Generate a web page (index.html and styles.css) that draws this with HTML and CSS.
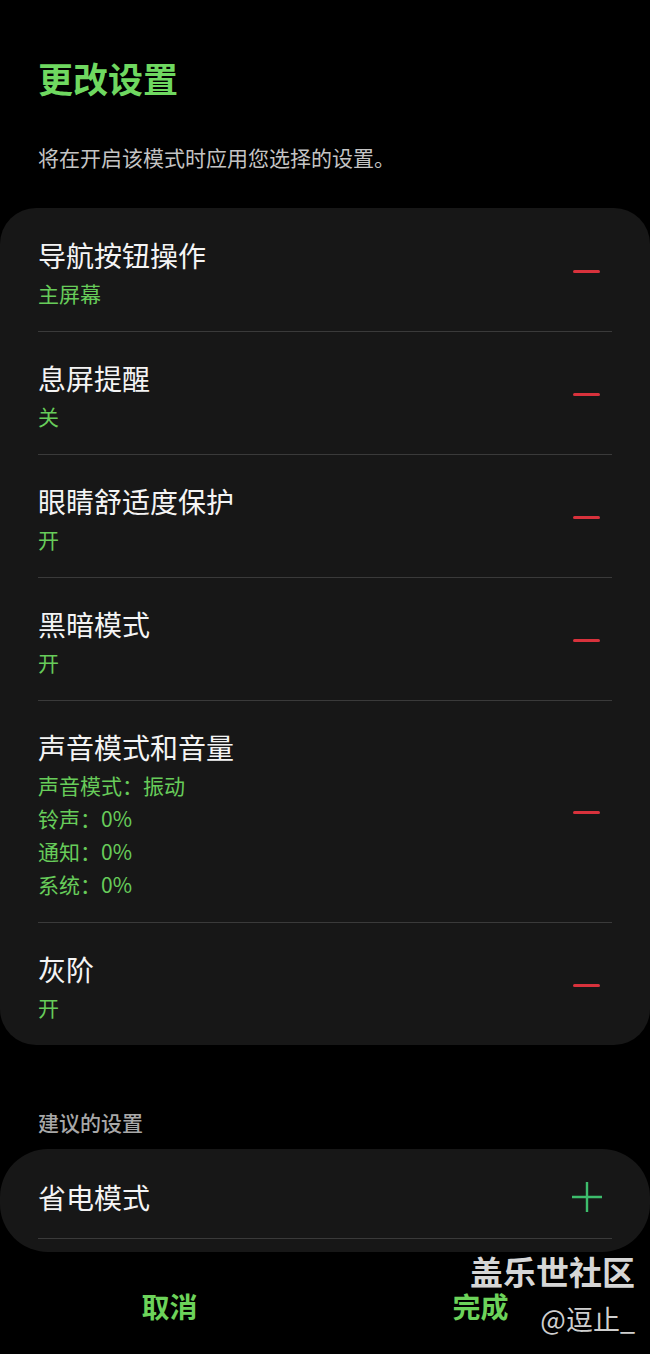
FILE: index.html
```html
<!DOCTYPE html>
<html lang="zh-CN">
<head>
  <meta charset="UTF-8" />
  <meta name="viewport" content="width=device-width, initial-scale=1.0"/>
  <title>更改设置</title>
  <link rel="stylesheet" href="styles.css">
</head>
<body>

<div class="page">
  <!-- 标题 -->
  <div class="header">
    <h1>更改设置</h1>
    <p class="desc">将在开启该模式时应用您选择的设置。</p>
  </div>

  <!-- 已选设置 -->
  <div class="card">
    <div class="row">
      <div class="text">
        <div class="name">导航按钮操作</div>
        <div class="value">主屏幕</div>
      </div>
      <span class="minus"></span>
    </div>
    <div class="row">
      <div class="text">
        <div class="name">息屏提醒</div>
        <div class="value">关</div>
      </div>
      <span class="minus"></span>
    </div>
    <div class="row">
      <div class="text">
        <div class="name">眼睛舒适度保护</div>
        <div class="value">开</div>
      </div>
      <span class="minus"></span>
    </div>
    <div class="row">
      <div class="text">
        <div class="name">黑暗模式</div>
        <div class="value">开</div>
      </div>
      <span class="minus"></span>
    </div>
    <div class="row">
      <div class="text">
        <div class="name">声音模式和音量</div>
        <div class="value">声音模式：振动</div>
        <div class="value">铃声：0%</div>
        <div class="value">通知：0%</div>
        <div class="value">系统：0%</div>
      </div>
      <span class="minus"></span>
    </div>
    <div class="row">
      <div class="text">
        <div class="name">灰阶</div>
        <div class="value">开</div>
      </div>
      <span class="minus"></span>
    </div>
  </div>

  <!-- 建议的设置 -->
  <div class="section-title">建议的设置</div>
  <div class="card card-suggest">
    <div class="row row-single">
      <div class="text">
        <div class="name">省电模式</div>
      </div>
      <svg class="plus" width="30" height="30" viewBox="0 0 30 30">
        <path d="M15 0V30M0 15H30" stroke="#3dbd6c" stroke-width="2.4" fill="none"/>
      </svg>
    </div>
  </div>

  <!-- 底部按钮 -->
  <div class="bottom-bar">
    <button class="btn">取消</button>
    <button class="btn">完成</button>
  </div>

  <div class="watermark">
    <div class="wm-main">盖乐世社区</div>
    <div class="wm-user">@逗止_</div>
  </div>
</div>

</body>
</html>
```

FILE: styles.css
```css
body {
  margin: 0;
  background-color: #000;
  font-family: "Noto Sans CJK SC", "Noto Sans", sans-serif;
  color: #f2f2f2;
}
.page {
  position: relative;
  width: 650px;
  height: 1354px;
  overflow: hidden;
}
.header {
  padding: 56px 38px 0;
}
h1 {
  margin: 0;
  font-size: 35px;
  line-height: 44px;
  font-weight: 700;
  color: #6fd860;
}
.desc {
  margin: 43px 0 0;
  font-size: 21px;
  line-height: 28px;
  color: #c4c4c4;
}
.card {
  margin-top: 37px;
  background-color: #171717;
  border-radius: 36px;
  padding: 0 38px;
}
.row {
  display: flex;
  align-items: center;
  justify-content: space-between;
  padding: 27px 0 21px;
}
.row + .row {
  border-top: 1px solid #3a3a3a;
  padding-top: 26px;
}
.name {
  font-size: 28px;
  line-height: 40px;
  color: #f4f4f4;
}
.value {
  font-size: 21px;
  line-height: 33px;
  color: #67cc5a;
}
.name + .value {
  margin-top: 2px;
}
.minus {
  display: block;
  width: 27px;
  height: 3px;
  border-radius: 2px;
  background-color: #d8323c;
  margin: 0 12px 3px 0;
}
.section-title {
  margin-top: 63px;
  padding: 0 38px;
  font-size: 21px;
  line-height: 28px;
  font-weight: 500;
  color: #a8a8a8;
}
.card-suggest {
  margin-top: 13px;
  border-radius: 48px;
  padding-bottom: 13px;
}
.row-single {
  padding: 28px 0 21px;
  border-bottom: 1px solid #3a3a3a;
}
.plus {
  display: block;
  margin-right: 10px;
}
.bottom-bar {
  display: flex;
  padding: 38px 14px 0;
}
.btn {
  flex: 1;
  background: none;
  border: none;
  padding: 0;
  font-family: inherit;
  font-size: 28px;
  line-height: 32px;
  font-weight: 700;
  color: #6cd35a;
}
.watermark {
  position: absolute;
  right: 15px;
  top: 1253px;
  text-align: right;
}
.wm-main {
  font-size: 33px;
  line-height: 36px;
  font-weight: 700;
  color: #d6d6d6;
}
.wm-user {
  margin-top: 14px;
  font-size: 27px;
  line-height: 32px;
  color: #cfcfcf;
}
```
